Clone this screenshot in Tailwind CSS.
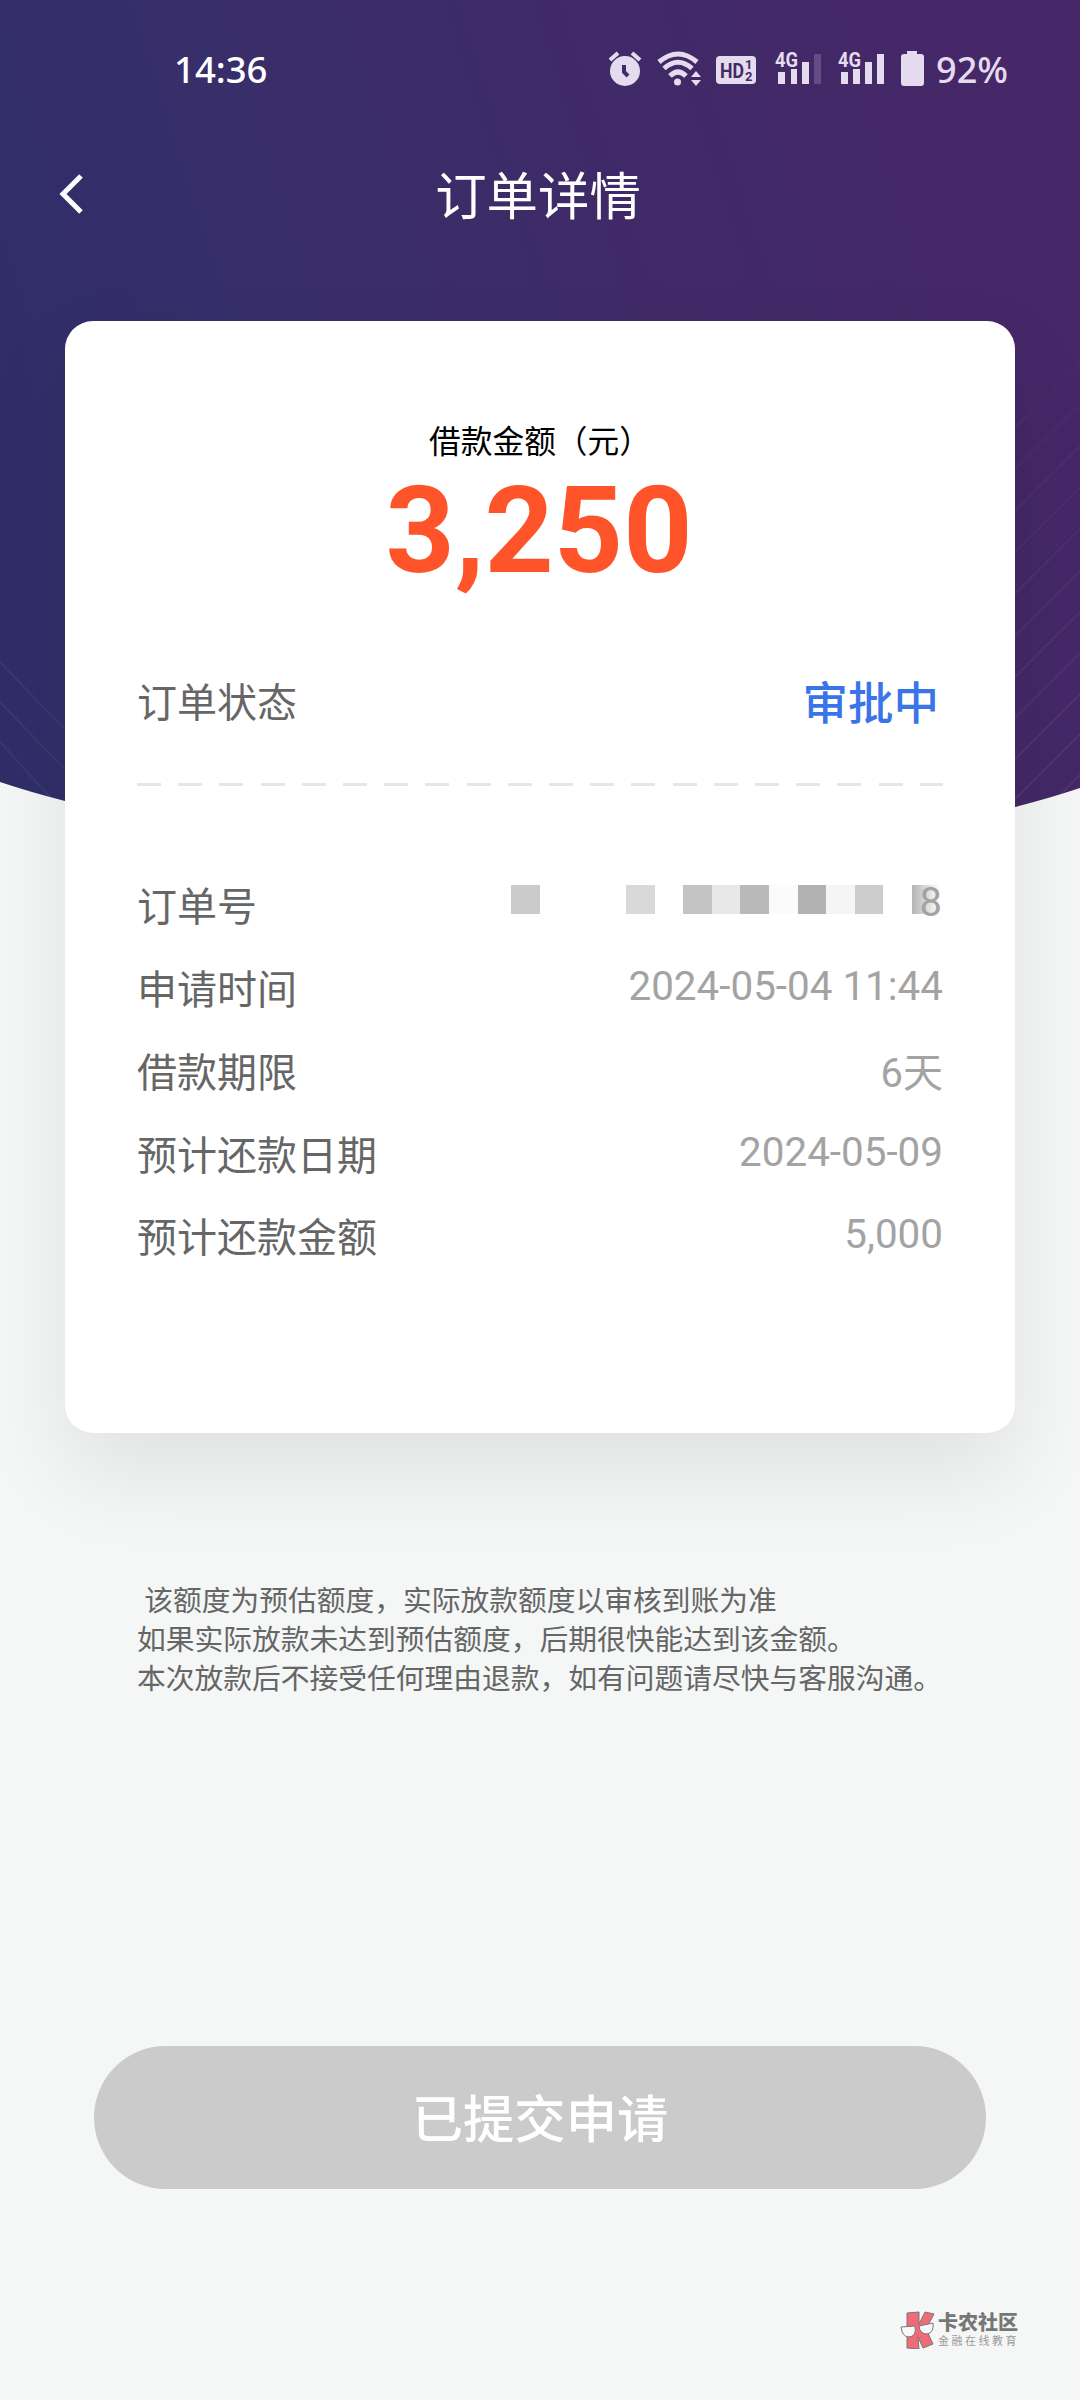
<!DOCTYPE html>
<html lang="zh-CN">
<head>
<meta charset="utf-8">
<title>订单详情</title>
<script src="https://cdn.jsdelivr.net/npm/@tailwindcss/browser@4"></script>
</head>
<body class="w-[1080px] bg-[#f5f7f7]">
<div class="relative isolate flex h-[2400px] w-[1080px] flex-col overflow-hidden bg-[#f5f7f6] font-[Roboto,'Noto_Sans_CJK_SC',sans-serif]">

  <!-- header backdrop -->
  <svg class="absolute left-0 top-0 -z-10" width="1080" height="860" viewBox="0 0 1080 860">
    <defs>
      <linearGradient id="bg" gradientUnits="userSpaceOnUse" x1="0" y1="420" x2="1000" y2="100">
        <stop offset="0" stop-color="#2f2e69"/><stop offset=".3" stop-color="#382e6a"/><stop offset=".62" stop-color="#3f2a67"/><stop offset="1" stop-color="#462768"/>
      </linearGradient>
      <linearGradient id="fade" x1="0" y1="0" x2="0" y2="1">
        <stop offset=".3" stop-color="#fff" stop-opacity="0"/><stop offset=".8" stop-color="#fff"/>
      </linearGradient>
      <mask id="m"><rect width="1080" height="860" fill="url(#fade)"/></mask>
      <clipPath id="c"><path d="M0 0H1080V788Q1050 798 1015 807Q540 930 65 801Q30 792 0 782Z"/></clipPath>
    </defs>
    <g clip-path="url(#c)">
      <rect width="1080" height="860" fill="url(#bg)"/>
      <g mask="url(#m)" fill="none" stroke="#fff" stroke-width="2">
        <path stroke-opacity=".06" d="M1000 443L1100 343M1000 484L1100 384M1000 526L1100 426M1000 567L1100 467M1000 609L1100 509M1000 651L1100 551M1000 692L1100 592M1000 733L1100 633M1000 774L1100 674M1000 814L1100 714M1020 835L1100 755"/>
        <path stroke-opacity=".05" d="M0 662L70 735M0 702L70 775M0 742L60 808"/>
      </g>
    </g>
  </svg>

  <!-- status bar -->
  <div class="flex h-[140px] items-center justify-between pl-[174px] pr-[66px] font-['Noto_Sans',sans-serif] text-white">
    <div class="pb-[2px] text-[36.500px] font-medium leading-none">14:36</div>
    <svg width="408" height="60" viewBox="606 40 408 60" fill="#e4dcee" class="font-['Noto_Sans',sans-serif]">
      <!-- alarm -->
      <circle cx="625" cy="71" r="15"/>
      <path d="M610 60l8-7M640 60l-8-7" stroke="#e4dcee" stroke-width="4"/>
      <path d="M624 65v7l4 4" fill="none" stroke="#432968" stroke-width="4"/>
      <!-- wifi -->
      <g fill="none" stroke="#e4dcee" stroke-width="5">
        <path d="M659 62Q678 46 697 62"/><path d="M664 68.500Q678 56 692 68.500"/><path d="M670 76Q678 68 686 76"/>
      </g>
      <circle cx="677.500" cy="82" r="3.500"/>
      <path d="M691 77l5-6 5 6zM691 80l5 6 5-6z"/>
      <!-- HD -->
      <rect x="716" y="56" width="40" height="28" rx="4"/>
      <text x="720" y="78" font-size="21" font-weight="700" fill="#432968" textLength="24" lengthAdjust="spacingAndGlyphs" font-family="Roboto">HD</text>
      <text x="745" y="69" font-size="13" font-weight="700" fill="#432968" font-family="Roboto">1</text>
      <text x="745" y="81" font-size="13" font-weight="700" fill="#432968" font-family="Roboto">2</text>
      <!-- signals -->
      <text x="775" y="67" font-size="20" font-weight="700" textLength="23" lengthAdjust="spacingAndGlyphs" font-family="Roboto">4G</text>
      <path d="M778 72h7v12h-7zM791 69h6v15h-6zM802 62h7v22h-7z"/>
      <path d="M814 54h7v30h-7z" opacity=".2"/>
      <text x="838" y="67" font-size="20" font-weight="700" textLength="23" lengthAdjust="spacingAndGlyphs" font-family="Roboto">4G</text>
      <path d="M841 72h7v12h-7zM853 69h7v15h-7zM865 62h7v22h-7zM877 54h7v30h-7z"/>
      <!-- battery -->
      <path d="M907 51h10v3h4q3 0 3 3v26q0 3-3 3h-17q-3 0-3-3V57q0-3 3-3h3z"/>
      <text x="936" y="82.500" font-size="36" font-weight="500" textLength="72" lengthAdjust="spacingAndGlyphs">92%</text>
    </svg>
  </div>

  <!-- title bar -->
  <div class="flex h-[112px] items-center">
    <svg class="ml-[56px] w-[30px]" width="30" height="44" viewBox="0 0 30 44" fill="none" stroke="#fff" stroke-width="5"><path d="M25 2L7 20l18 18"/></svg>
    <div class="mr-[90px] flex-1 pt-[3px] text-center text-[51.400px] leading-none text-white">订单详情</div>
  </div>

  <!-- card -->
  <div class="mx-[65px] mt-[69px] flex h-[1112px] flex-col rounded-[28px] bg-white px-[72px] shadow-[0_40px_90px_rgba(0,0,0,0.085)]">
    <div class="mt-[98px] text-center text-[31.700px] leading-[48px] text-black">借款金额（元）</div>
    <div class="-mt-px h-[130px] pr-[2px] text-center text-[120.800px] font-bold leading-[130px] text-[#ff5429]">3,250</div>
    <div class="mt-[68px] flex h-[80px] items-center justify-between">
      <span class="text-[40px] text-[#666]">订单状态</span>
      <span class="mr-[4px] pt-[2px] text-[45.500px] font-medium text-[#3975e8]">审批中</span>
    </div>
    <div class="mt-[39px] h-[3px] bg-[repeating-linear-gradient(90deg,#e6e6e6_0_24px,transparent_24px_41.200px)]"></div>
    <div class="mt-[80px] flex flex-col text-[40px] text-[#666]">
      <div class="flex h-[83px] items-center justify-between">
        <span>订单号</span>
        <span class="flex items-center pb-[16px] text-[#a3a3a3]">
          <span class="mr-[86px] size-[29px] bg-[#cbcbcb]"></span>
          <span class="mr-[28px] size-[29px] bg-[#d9d9d9]"></span>
          <span class="size-[29px] bg-[#c4c4c4]"></span>
          <span class="h-[29px] w-[28px] bg-[#e8e8e8]"></span>
          <span class="size-[29px] bg-[#b9b9b9]"></span>
          <span class="size-[29px] bg-[#fbfbfb]"></span>
          <span class="h-[29px] w-[28px] bg-[#b2b2b2]"></span>
          <span class="size-[29px] bg-[#f5f5f5]"></span>
          <span class="mr-[29px] h-[29px] w-[28px] bg-[#cdcdcd]"></span>
          <span class="flex h-[29px] w-[31px] items-center justify-end bg-linear-to-r from-[#b5b5b5] to-white to-90%"><span class="pr-px pt-[7px] leading-none">8</span></span>
        </span>
      </div>
      <div class="flex h-[83px] items-center justify-between"><span>申请时间</span><span class="pb-[7px] text-[40.400px] text-[#a3a3a3]">2024-05-04 11:44</span></div>
      <div class="flex h-[83px] items-center justify-between"><span>借款期限</span><span class="text-[#a3a3a3]">6天</span></div>
      <div class="flex h-[83px] items-center justify-between"><span>预计还款日期</span><span class="pb-[7px] text-[40.400px] text-[#a3a3a3]">2024-05-09</span></div>
      <div class="flex h-[82px] items-center justify-between"><span>预计还款金额</span><span class="pb-[8px] text-[40.400px] text-[#a3a3a3]">5,000</span></div>
    </div>
  </div>

  <!-- notes -->
  <div class="ml-[137px] mt-[149px] text-[28.750px] leading-[39px] text-[#666]">
    <p class="whitespace-pre"> 该额度为预估额度，实际放款额度以审核到账为准</p>
    <p>如果实际放款未达到预估额度，后期很快能达到该金额。</p>
    <p>本次放款后不接受任何理由退款，如有问题请尽快与客服沟通。</p>
  </div>

  <div class="mx-[94px] mt-[347px] flex h-[143px] items-center justify-center rounded-full bg-[#cbcbcb] pt-[8px] text-[51.300px] font-medium text-white">已提交申请</div>

  <!-- community mark -->
  <div class="mr-[61px] mt-[122px] flex items-center justify-end gap-[2px]">
    <svg width="36" height="38" viewBox="0 0 36 38" stroke="#777" stroke-width="1">
      <path d="M7 2l12-1v12l6-12 9 2-8 15 7 15-10 4-5-11 1 12-12-1z" fill="#ef6b78"/>
      <path d="M1 16l14-1q2 11-7 11-6-1-7-10zM19 15l14-3q1 10-6 11-7 0-8-8z" fill="#f8f8f8"/>
    </svg>
    <div class="flex flex-col">
      <div class="text-[20px] font-black leading-[22px] text-[#777]">卡农社区</div>
      <div class="text-[11px] leading-[15px] tracking-[2.500px] text-[#999]">金融在线教育</div>
    </div>
  </div>
</div>
</body>
</html>
